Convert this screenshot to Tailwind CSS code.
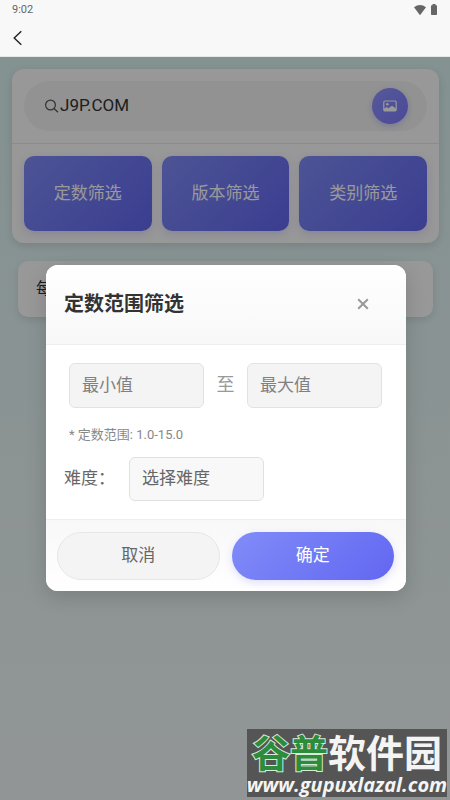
<!DOCTYPE html>
<html lang="zh-CN">
<head>
<meta charset="utf-8">
<meta name="viewport" content="width=device-width, initial-scale=1">
<title>定数范围筛选</title>
<script src="https://cdn.jsdelivr.net/npm/@tailwindcss/browser@4"></script>
</head>
<body class="flex min-h-screen flex-col bg-[#f8f8f8] font-['Roboto','Noto_Sans_CJK_SC',sans-serif] text-[17px] text-[#333]">
  <header class="border-b border-[#e4e8e8]">
    <div class="flex h-5 items-center justify-between pr-3 pl-3 text-[11px] text-[#666]">
      <span>9:02</span>
      <span class="flex items-center gap-1">
        <svg class="h-3 w-3" viewBox="0 0 12 12" fill="#666" aria-hidden="true"><path d="M0 3.200Q6-1.400 12 3.200L6.600 10.600Q6 11.200 5.400 10.600Z"/></svg>
        <svg class="h-3 w-2" viewBox="0 0 8 12" fill="#666" aria-hidden="true"><path d="M2.500 0h3v1.200H6.300Q7 1.200 7 2v8.300Q7 11 6.300 11H1.700Q1 11 1 10.300V2Q1 1.200 1.700 1.200h.8Z"/></svg>
      </span>
    </div>
    <nav class="flex h-9 items-center px-3">
      <button type="button" aria-label="返回">
        <svg class="h-4 w-3" viewBox="0 0 12 16" fill="none" stroke="#222" stroke-width="1.400" aria-hidden="true"><path d="M9.300 1.200 2.200 8l7.100 6.800"/></svg>
      </button>
    </nav>
  </header>

  <div class="relative grow bg-linear-to-b from-[#dcf3f3] to-[#f4f9f9]">
    <main class="pt-3 pr-[11px] pl-3">
      <section class="rounded-xl bg-[#fdfdfd] shadow-[0_3px_10px_rgba(0,0,0,0.12)]">
        <div class="border-b border-[#e8e8e8] p-3">
          <form class="flex h-[50px] items-center rounded-full bg-[#f4f4f4] pr-[19px] pl-5">
            <svg class="h-3.5 w-4 shrink-0" viewBox="0 0 16 14" fill="none" stroke="#555" stroke-width="1.200" aria-hidden="true"><circle cx="6.500" cy="6" r="4.900"/><path d="m10 9.500 4 3.700"/></svg>
            <input aria-label="搜索" value="J9P.COM" class="min-w-0 grow bg-transparent outline-none">
            <button type="button" aria-label="图片搜索" class="flex size-9 shrink-0 items-center justify-center rounded-full bg-linear-135 from-[#8f95ff] to-[#7d79ff] shadow-[0_2px_6px_rgba(99,102,241,0.3)]">
              <svg class="h-3.5 w-3.5" viewBox="0 0 14 14" aria-hidden="true"><rect x=".8" y="2" width="12.400" height="10" rx="1.200" fill="none" stroke="#fff" stroke-width="1.200"/><circle cx="4.300" cy="5.300" r="1.300" fill="#fff"/><path d="M1 11V9.800L3.500 7.900 5.300 9.200 9 6.800l4 2.600V12H1Z" fill="#fff"/></svg>
            </button>
          </form>
        </div>
        <div class="grid grid-cols-3 gap-2.5 p-3">
          <button type="button" class="h-[75px] rounded-[10px] bg-linear-135 from-[#818cf8] to-[#6366f1] text-white shadow-[0_3px_8px_rgba(99,102,241,0.2)]">定数筛选</button>
          <button type="button" class="h-[75px] rounded-[10px] bg-linear-135 from-[#818cf8] to-[#6366f1] text-white shadow-[0_3px_8px_rgba(99,102,241,0.2)]">版本筛选</button>
          <button type="button" class="h-[75px] rounded-[10px] bg-linear-135 from-[#818cf8] to-[#6366f1] text-white shadow-[0_3px_8px_rgba(99,102,241,0.2)]">类别筛选</button>
        </div>
      </section>
      <section class="mx-1.5 mt-[18px] flex h-14 items-center rounded-[10px] bg-[#fdfdfd] px-[18px] text-base shadow-[0_3px_8px_rgba(0,0,0,0.1)]">每</section>
    </main>

    <div class="absolute inset-0 flex items-center justify-center bg-black/40 pb-0.5 pl-0.5">
      <div role="dialog" aria-modal="true" aria-labelledby="dialog-title" class="w-[360px] max-w-[90%] overflow-hidden rounded-xl bg-white shadow-[0_6px_20px_rgba(0,0,0,0.15)]">
        <div class="flex h-20 items-center justify-between border-b border-[#eee] bg-linear-to-b from-white to-[#f8f8f8] pr-7 pl-[18px]">
          <h1 id="dialog-title" class="text-xl font-bold">定数范围筛选</h1>
          <button type="button" aria-label="关闭" class="flex size-[30px] items-center justify-center">
            <svg class="size-3" viewBox="0 0 12 12" fill="none" stroke="#999" stroke-width="2" aria-hidden="true"><path d="m1.200 1.200 9.600 9.600m0-9.600-9.600 9.600"/></svg>
          </button>
        </div>
        <div class="px-[18px] py-[18px]">
          <div class="flex items-center px-[5px]">
            <input aria-label="最小值" placeholder="最小值" class="h-[45px] w-[135px] rounded-md border border-[#e2e2e2] bg-[#f4f4f4] px-3 outline-none placeholder:text-[#808080]">
            <span class="w-[43px] text-center text-lg text-[#999]">至</span>
            <input aria-label="最大值" placeholder="最大值" class="h-[45px] w-[135px] rounded-md border border-[#e2e2e2] bg-[#f4f4f4] px-3 outline-none placeholder:text-[#808080]">
          </div>
          <p class="mt-[17px] px-[5px] text-[13px] leading-5 text-[#888]">* 定数范围: 1.0-15.0</p>
          <div class="mt-3 flex items-center">
            <label for="difficulty" class="w-[65px] text-[#666]">难度：</label>
            <select id="difficulty" class="h-11 w-[135px] appearance-none rounded-md border border-[#e0e0e0] bg-[#f8f8f8] px-3 text-[#666] outline-none">
              <option>选择难度</option>
            </select>
          </div>
        </div>
        <div class="grid grid-cols-2 gap-3 border-t border-[#eee] bg-linear-to-b from-[#f8f8f8] to-white pt-3 pr-3 pb-[11px] pl-[11px]">
          <button type="button" class="h-12 rounded-full border border-[#e6e6e6] bg-[#f4f4f4] text-[#666]">取消</button>
          <button type="button" class="h-12 rounded-full bg-linear-135 from-[#818cf8] to-[#6366f1] text-white shadow-[0_3px_8px_rgba(99,102,241,0.2)]">确定</button>
        </div>
      </div>
    </div>

    <div class="absolute right-[3px] bottom-[3px] flex h-[68px] w-[200px] flex-col items-center justify-between bg-[#555] pt-1 pb-0.5 whitespace-nowrap text-[#f4f4f4]">
      <div class="font-['Noto_Sans_CJK_SC',sans-serif] text-[38px] leading-9 font-bold"><span class="text-[#2c8c3c] [-webkit-text-stroke:2px_#d8ead8] [paint-order:stroke_fill]">谷普</span><span>软件园</span></div>
      <div class="font-['Open_Sans',sans-serif] text-[20px] leading-5 font-bold italic">www.gupuxlazal.com</div>
    </div>
  </div>
</body>
</html>
